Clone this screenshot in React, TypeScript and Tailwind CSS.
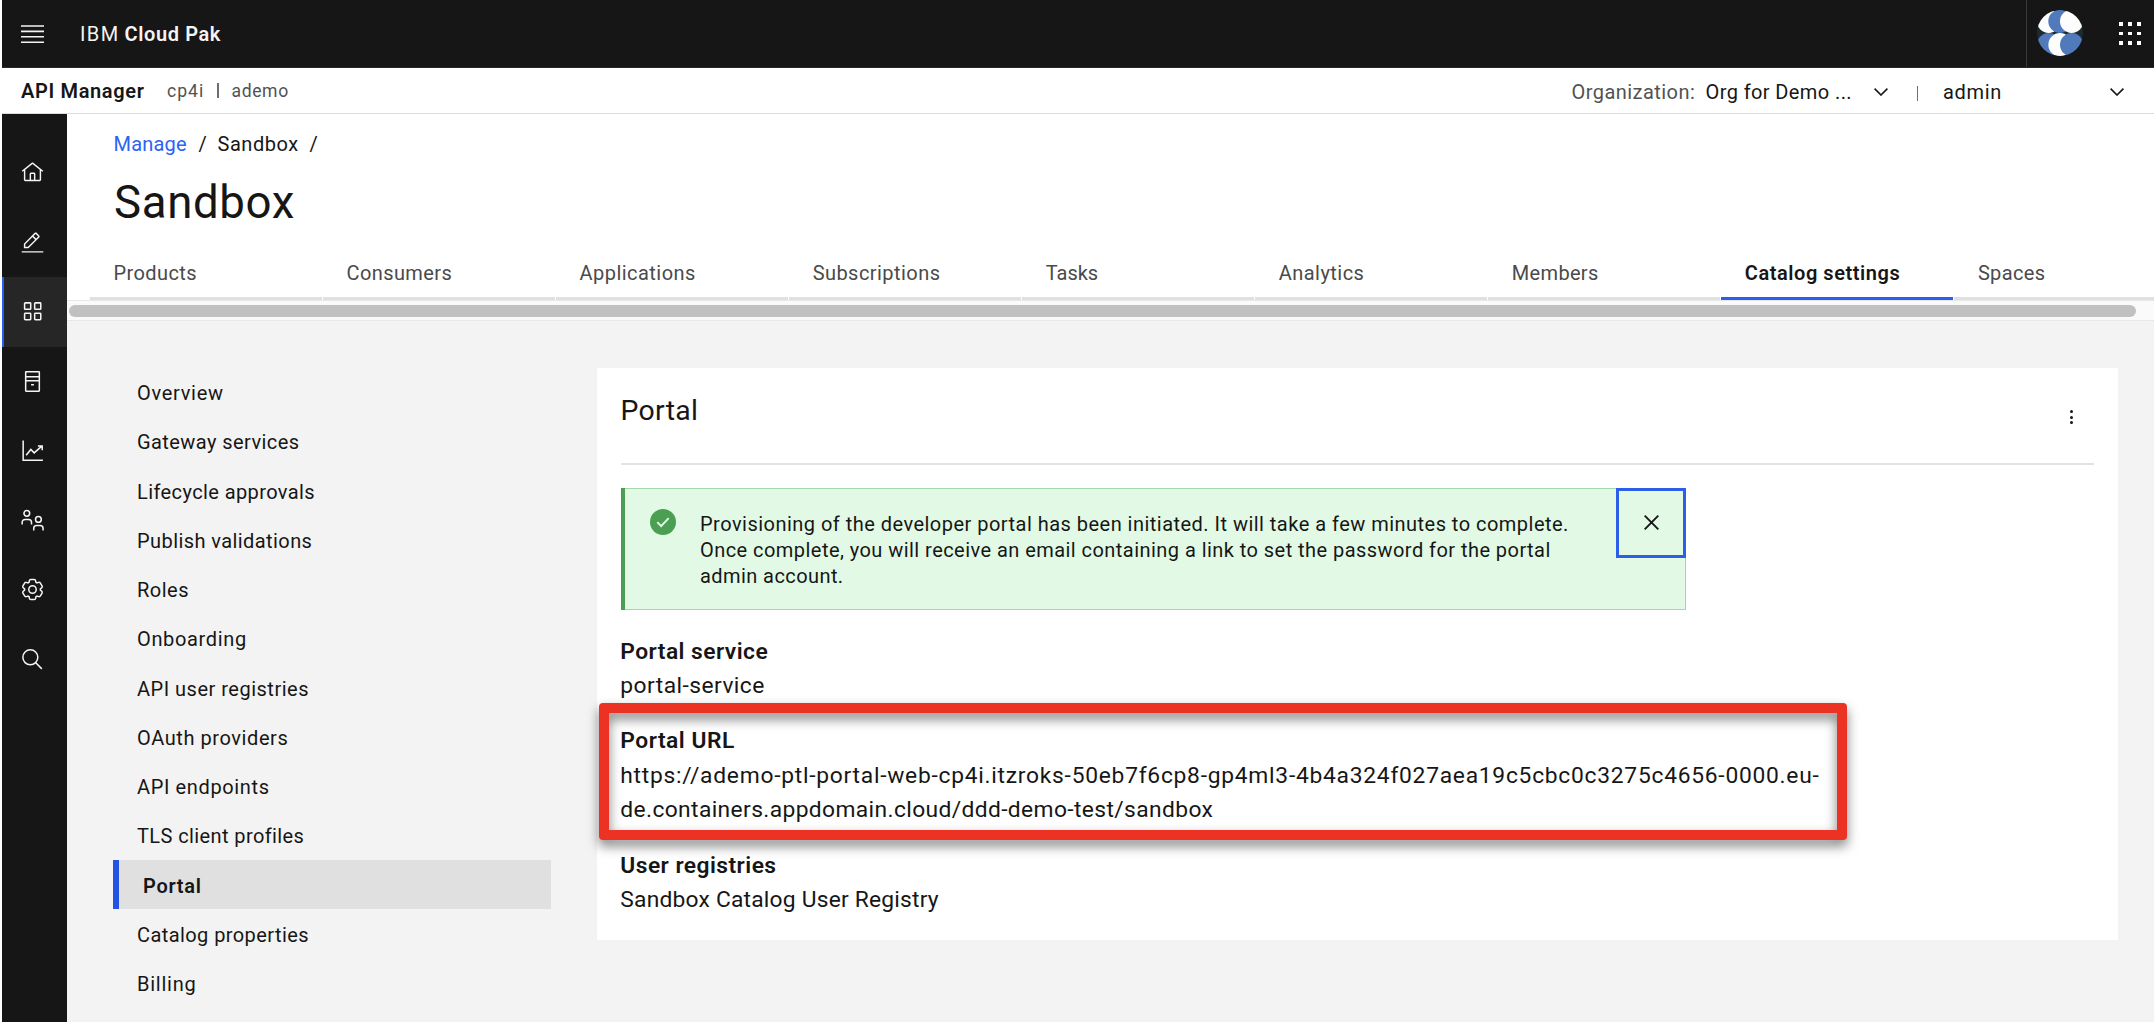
import type { ReactNode } from "react";

function Stroke({ children }: { children: ReactNode }) {
  return (
    <svg viewBox="0 0 32 32" className="size-[23px]" fill="none" stroke="#f4f4f4" strokeWidth="2.1">
      {children}
    </svg>
  );
}

function HomeIcon() {
  return (
    <svg viewBox="0 0 32 32" className="size-[23px]" fill="#f4f4f4">
      <path d="M16.6123,2.2138a1.01,1.01,0,0,0-1.2427,0L1,13.4194l1.2427,1.5717L4,13.6208V26a2.0041,2.0041,0,0,0,2,2H26a2.0037,2.0037,0,0,0,2-2V13.63L29.7573,15,31,13.4282ZM18,26H14V18h4Zm2,0V18a2.0023,2.0023,0,0,0-2-2H14a2.002,2.002,0,0,0-2,2v8H6V12.0615l10-7.79,10,7.8005V26Z" />
    </svg>
  );
}

function EditIcon() {
  return (
    <svg viewBox="0 0 32 32" className="size-[23px]" fill="#f4f4f4">
      <path d="M1 28h30v2H1zM25.4 9c.8-.8.8-2 0-2.8l-3.6-3.6c-.8-.8-2-.8-2.8 0l-15 15V24h6.4l15-15zM20.4 4L24 7.6l-3 3L17.4 7l3-3zM6 22v-3.6l10-10 3.6 3.6-10 10H6z" />
    </svg>
  );
}

function GridIcon() {
  return (
    <Stroke>
      <rect x="5" y="4" width="8.5" height="9" rx="1" />
      <rect x="19" y="4" width="8.5" height="9" rx="1" />
      <rect x="5" y="18.5" width="8.5" height="9" rx="1" />
      <rect x="19" y="18.5" width="8.5" height="9" rx="1" />
    </Stroke>
  );
}

function ServerIcon() {
  return (
    <Stroke>
      <rect x="6.5" y="2.5" width="19" height="27" rx="0.5" />
      <path d="M6.5 9.5h19M6.5 15h19M14 20.5h4" />
    </Stroke>
  );
}

function ChartIcon() {
  return (
    <Stroke>
      <path d="M3 2v27.5h27.5M7.2 22.5l6.5-8 4.6 4.8L29 10M23.5 9.8h6v6" />
    </Stroke>
  );
}

function MembersIcon() {
  return (
    <Stroke>
      <circle cx="8.1" cy="6" r="4" />
      <path d="M1.6 21.5v-3a4 4 0 0 1 4-4h5a4 4 0 0 1 4 4v3" />
      <circle cx="24.2" cy="14.5" r="4" />
      <path d="M17.7 30v-3a4 4 0 0 1 4-4h5a4 4 0 0 1 4 4v3" />
    </Stroke>
  );
}

function GearIcon() {
  return (
    <Stroke>
      <path d="M27,16.76c0-.25,0-.5,0-.76s0-.51,0-.77l1.92-1.68A2,2,0,0,0,29.3,11L26.94,7a2,2,0,0,0-1.73-1,2,2,0,0,0-.64.1l-2.43.82a11.35,11.35,0,0,0-1.31-.75l-.51-2.52a2,2,0,0,0-2-1.61H13.64a2,2,0,0,0-2,1.61l-.51,2.52a11.48,11.48,0,0,0-1.32.75L7.43,6.06A2,2,0,0,0,6.79,6,2,2,0,0,0,5.06,7L2.7,11a2,2,0,0,0,.41,2.51L5,15.24c0,.25,0,.5,0,.76s0,.51,0,.77L3.11,18.45A2,2,0,0,0,2.7,21L5.06,25a2,2,0,0,0,1.73,1,2,2,0,0,0,.64-.1l2.43-.82a11.35,11.35,0,0,0,1.31.75l.51,2.52a2,2,0,0,0,2,1.61h4.72a2,2,0,0,0,2-1.61l.51-2.52a11.48,11.48,0,0,0,1.32-.75l2.42.82a2,2,0,0,0,.64.1,2,2,0,0,0,1.73-1L29.3,21a2,2,0,0,0-.41-2.51Z" />
      <circle cx="16" cy="16" r="5.2" />
    </Stroke>
  );
}

function SearchIcon() {
  return (
    <Stroke>
      <circle cx="13" cy="13" r="10.4" />
      <path d="M20.5 20.5l8.5 8.5" />
    </Stroke>
  );
}

function Chevron() {
  return (
    <svg viewBox="0 0 14 8" className="h-2 w-3.5 shrink-0" fill="none" stroke="#161616" strokeWidth="1.6">
      <path d="M0.6 0.6L7 7L13.4 0.6" />
    </svg>
  );
}

function Avatar() {
  return (
    <svg viewBox="81 28 138 138" className="size-[46px] shrink-0">
      <clipPath id="avatar">
        <circle cx="150" cy="97" r="69" />
      </clipPath>
      <g clipPath="url(#avatar)">
        <rect x="81" y="28" width="138" height="138" fill="#1c2a33" />
        <circle cx="116" cy="62" r="35" fill="#fdfdfd" />
        <circle cx="150" cy="62" r="35" fill="#507abb" />
        <circle cx="185" cy="62" r="35" fill="#fdfdfd" />
        <circle cx="116" cy="132" r="35" fill="#507abb" />
        <circle cx="150" cy="132" r="35" fill="#fdfdfd" />
        <circle cx="185" cy="132" r="35" fill="#507abb" />
      </g>
    </svg>
  );
}

const rail = [HomeIcon, EditIcon, GridIcon, ServerIcon, ChartIcon, MembersIcon, GearIcon, SearchIcon];

const tabs = [
  { label: "Products", tracking: "tracking-[0.4px]" },
  { label: "Consumers", tracking: "tracking-[0.4px]" },
  { label: "Applications", tracking: "tracking-[0.45px]" },
  { label: "Subscriptions", tracking: "tracking-[0.45px]" },
  { label: "Tasks", tracking: "tracking-[0px]" },
  { label: "Analytics", tracking: "tracking-[0.46px]" },
  { label: "Members", tracking: "tracking-[0.33px]" },
  { label: "Catalog settings", tracking: "tracking-[0.55px]", active: true },
  { label: "Spaces", tracking: "tracking-[0.35px]" },
];

const sections = [
  { label: "Overview", tracking: "tracking-[0.7px]" },
  { label: "Gateway services", tracking: "tracking-[0.43px]" },
  { label: "Lifecycle approvals", tracking: "tracking-[0.4px]" },
  { label: "Publish validations", tracking: "tracking-[0.42px]" },
  { label: "Roles", tracking: "tracking-[0.5px]" },
  { label: "Onboarding", tracking: "tracking-[0.65px]" },
  { label: "API user registries", tracking: "tracking-[0.5px]" },
  { label: "OAuth providers", tracking: "tracking-[0.58px]" },
  { label: "API endpoints", tracking: "tracking-[0.63px]" },
  { label: "TLS client profiles", tracking: "tracking-[0.4px]" },
  { label: "Portal", tracking: "tracking-[0.7px]", active: true },
  { label: "Catalog properties", tracking: "tracking-[0.42px]" },
  { label: "Billing", tracking: "tracking-[0.75px]" },
];

function TopBar() {
  return (
    <header className="flex h-[68px] shrink-0 items-center border-b border-[#2b2829] bg-[#161616] text-[#f4f4f4]">
      <svg viewBox="0 0 23 18" className="ml-[19px] h-[18px] w-[23px]" stroke="#f4f4f4" strokeWidth="1.6">
        <path d="M0 1h23M0 6.4h23M0 11.8h23M0 17.2h23" />
      </svg>
      <div className="ml-9 flex items-center gap-[5px]">
        <span className="tracking-[1.4px]">IBM</span>
        <span className="font-semibold tracking-[0.6px]">Cloud Pak</span>
      </div>
      <div className="ml-auto h-full w-px bg-[#393939]" />
      <div className="ml-[10px] -mt-[2px]">
        <Avatar />
      </div>
      <div className="mr-[13px] ml-9 grid grid-cols-3 gap-x-[5.2px] gap-y-[5.2px]">
        {Array.from({ length: 9 }, (_, i) => (
          <span key={i} className="size-[3.9px] bg-white" />
        ))}
      </div>
    </header>
  );
}

function ContextBar() {
  return (
    <div className="flex h-[46px] shrink-0 items-center border-b border-[#dcdcdc] text-[#161616]">
      <span className="ml-[19px] w-[146px] font-semibold tracking-[0.65px]">API Manager</span>
      <span className="w-[50px] text-[17.6px] tracking-[1px] text-[#525252]">cp4i</span>
      <span className="h-[15px] w-[1.5px] bg-[#6f6f6f]" />
      <span className="ml-[13px] text-[17.6px] tracking-[0.6px] text-[#525252]">ademo</span>
      <div className="ml-auto flex items-center pt-[2px]">
        <span className="w-[134px] tracking-[0.45px] text-[#525252]">Organization:</span>
        <span className="w-[168px] tracking-[0.4px]">Org for Demo ...</span>
        <Chevron />
        <span className="mt-[3px] ml-[29px] h-[15px] w-[1.5px] bg-[#6f6f6f]" />
        <span className="ml-[25px] w-[167px] tracking-[0.7px]">admin</span>
        <Chevron />
        <span className="w-[30px]" />
      </div>
    </div>
  );
}

function Rail() {
  return (
    <nav className="flex w-[65px] shrink-0 flex-col bg-[#161616] pt-6">
      {rail.map((Icon, i) => (
        <div
          key={i}
          className={
            i === 2
              ? "flex h-[69.5px] items-center justify-center border-l-2 border-[#2b5fea] bg-[#262626] pr-[6px]"
              : "flex h-[69.5px] items-center justify-center pr-1"
          }
        >
          <Icon />
        </div>
      ))}
    </nav>
  );
}

function CatalogHeader() {
  return (
    <div className="flex h-[186px] shrink-0 flex-col bg-white">
      <div className="mt-4 ml-[46.5px] flex h-7 items-center text-[#161616]">
        <span className="w-[85px] tracking-[0.2px] text-[#2b63f3]">Manage</span>
        <span className="w-[19px]">/</span>
        <span className="w-[92px] tracking-[0.55px]">Sandbox</span>
        <span>/</span>
      </div>
      <h1 className="mt-[14px] ml-[47px] h-[62px] text-[45.6px] leading-[62px] tracking-[0.65px] text-[#161616]">
        Sandbox
      </h1>
      <div className="mt-auto ml-[23px] flex h-[54px] gap-px overflow-hidden">
        {tabs.map((tab) => (
          <div
            key={tab.label}
            className={
              tab.active
                ? "w-[232.05px] shrink-0 border-b-[3px] border-[#2b5bf0] pl-[23.5px] leading-[54px] font-semibold text-[#161616]"
                : "w-[232.05px] shrink-0 border-b-[3px] border-[#e0e0e0] pl-[23.5px] leading-[54px] text-[#4a4a4a]"
            }
          >
            <span className={tab.tracking}>{tab.label}</span>
          </div>
        ))}
      </div>
    </div>
  );
}

function Sections() {
  return (
    <ul className="ml-[46px] w-[438px] shrink-0 pt-[46.5px] text-[#161616]">
      {sections.map((s) => (
        <li
          key={s.label}
          className={
            s.active
              ? "flex h-[49.25px] items-center border-l-[6px] border-[#2253e3] bg-[#e0e0e0] pt-[2px] pl-6 font-semibold"
              : "flex h-[49.25px] items-center pt-[2px] pl-6"
          }
        >
          <span className={s.tracking}>{s.label}</span>
        </li>
      ))}
    </ul>
  );
}

function Notification() {
  return (
    <div className="mt-[23px] flex h-[121.5px] w-[1065px] bg-[#e2fae5] text-[#161616]">
      <div className="w-1 shrink-0 bg-[#4b9f52]" />
      <div className="flex flex-1 border border-l-0 border-[#a3d9aa]">
        <svg viewBox="0 0 26 26" className="mt-5 ml-[25px] size-[26px] shrink-0">
          <circle cx="13" cy="13" r="13" fill="#4b9f52" />
          <path d="M7.3 13.2l3.8 3.9 7.6-7.9" fill="none" stroke="#e9fbec" strokeWidth="1.9" />
        </svg>
        <div className="mt-[22px] ml-6 w-[915px] shrink-0 leading-[26.15px] whitespace-nowrap">
          <div className="tracking-[0.475px]">
            Provisioning of the developer portal has been initiated. It will take a few minutes to complete.
          </div>
          <div className="tracking-[0.45px]">
            Once complete, you will receive an email containing a link to set the password for the portal
          </div>
          <div className="tracking-[0.42px]">admin account.</div>
        </div>
        <button className="-mt-px -mr-px ml-auto flex h-[70px] w-[70px] shrink-0 items-center justify-center border-[3px] border-[#2b5fe8] pb-px">
          <svg viewBox="0 0 15 15" className="size-[15px]" fill="none" stroke="#161616" strokeWidth="1.9">
            <path d="M0.7 0.7L14.3 14.3M14.3 0.7L0.7 14.3" />
          </svg>
        </button>
      </div>
    </div>
  );
}

function PortalCard() {
  return (
    <section className="mt-[47px] ml-[46px] h-[572px] w-[1521px] shrink-0 bg-white px-6 text-[#161616]">
      <div className="flex h-[97px] justify-between border-b-2 border-[#e2e2e2]">
        <h2 className="-ml-[0.5px] h-[86px] text-[28.4px] leading-[86px] tracking-[0.3px]">Portal</h2>
        <div className="mt-[42px] mr-[21px] flex flex-col gap-[2.7px]">
          <span className="size-[3px] rounded-full bg-[#161616]" />
          <span className="size-[3px] rounded-full bg-[#161616]" />
          <span className="size-[3px] rounded-full bg-[#161616]" />
        </div>
      </div>
      <Notification />
      <div className="mt-[25px] -ml-[0.7px] flex flex-col gap-[20.6px] text-[22.8px] leading-[34.6px] whitespace-nowrap">
        <div>
          <div className="font-semibold tracking-[0.45px]">Portal service</div>
          <div className="tracking-[0.45px]">portal-service</div>
        </div>
        <div className="relative">
          <div className="absolute -top-[21.5px] -left-[21.3px] h-[137px] w-[1248px] rounded-[4px] border-10 border-[#eb3223] drop-shadow-[0_6px_6px_rgba(0,0,0,0.5)]" />
          <div className="relative font-semibold tracking-[0.5px]">Portal URL</div>
          <div className="relative tracking-[0.74px]">
            https://ademo-ptl-portal-web-cp4i.itzroks-50eb7f6cp8-gp4ml3-4b4a324f027aea19c5cbc0c3275c4656-0000.eu-
          </div>
          <div className="relative tracking-[0.38px]">de.containers.appdomain.cloud/ddd-demo-test/sandbox</div>
        </div>
        <div>
          <div className="font-semibold tracking-[0.45px]">User registries</div>
          <div className="tracking-[0.21px]">Sandbox Catalog User Registry</div>
        </div>
      </div>
    </section>
  );
}

export default function App() {
  return (
    <div className="flex h-[1022px] w-[2154px] flex-col overflow-hidden bg-white pl-[2px] font-['Roboto',sans-serif] text-[20px] leading-7">
      <TopBar />
      <ContextBar />
      <div className="flex min-h-0 flex-1">
        <Rail />
        <main className="flex min-w-0 flex-1 flex-col bg-[#f3f3f3]">
          <CatalogHeader />
          <div className="flex h-[21px] shrink-0 items-center border-y border-[#e8e8e8] bg-[#fafafa] pl-[2px]">
            <div className="h-3 w-[2067px] rounded-full bg-[#c1c1c1]" />
          </div>
          <div className="flex min-h-0 flex-1">
            <Sections />
            <PortalCard />
          </div>
        </main>
      </div>
    </div>
  );
}
